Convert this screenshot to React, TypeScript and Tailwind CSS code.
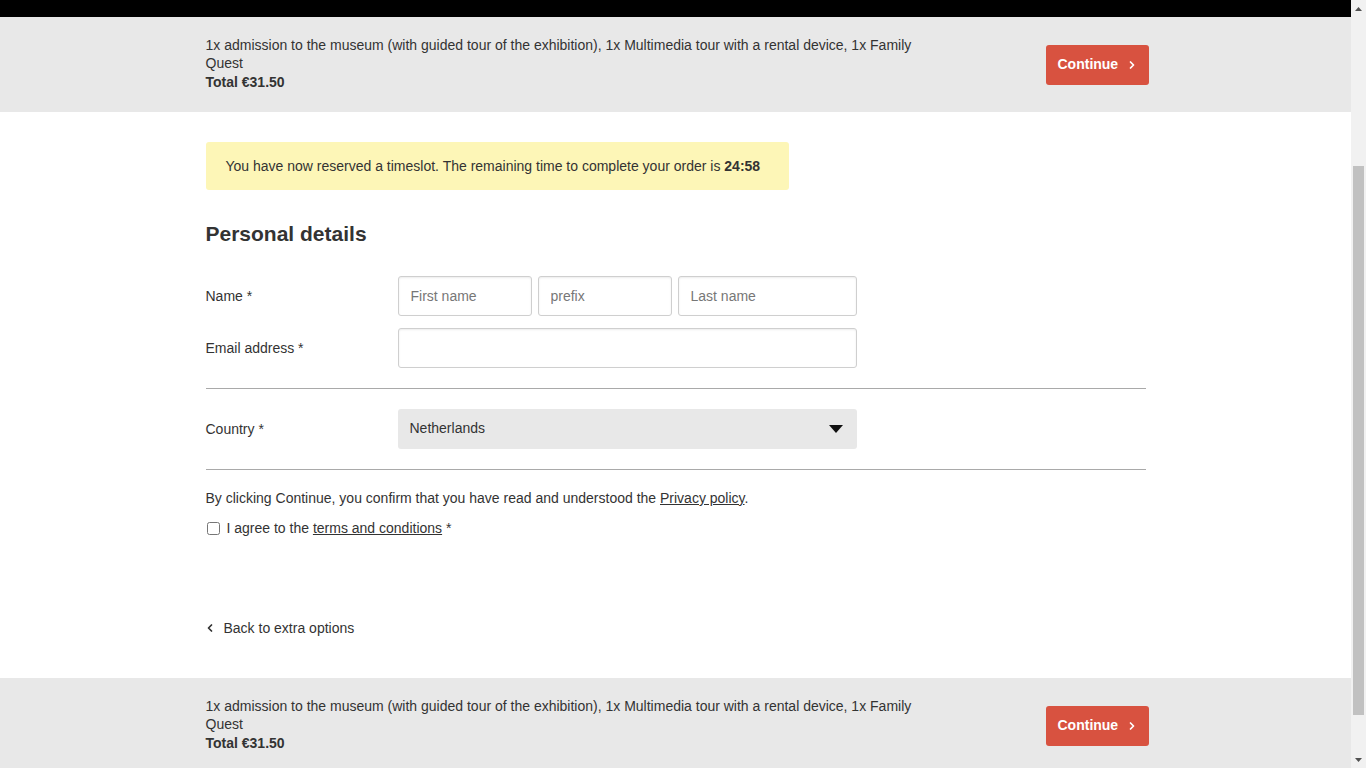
import { useEffect, useRef } from 'react';
import { ChevronLeft, ChevronRight } from 'lucide-react';

const SUMMARY =
  '1x admission to the museum (with guided tour of the exhibition), 1x Multimedia tour with a rental device, 1x Family Quest';

function OrderBar() {
  return (
    <div className="bg-[#e8e8e8]">
      <div className="w-[940px] mx-auto h-[95px] flex items-center justify-between">
        <div className="w-[720px] -mt-[2px] text-[14px] leading-[18px] text-[#333]">
          <p>{SUMMARY}</p>
          <p className="font-bold mt-px">Total €31.50</p>
        </div>
        <button className="-mr-[3px] w-[103px] h-10 pl-3 flex items-center gap-[8px] rounded-[3px] bg-[#d85240] text-white text-[14px] font-bold">
          Continue
          <ChevronRight className="w-3 h-3" strokeWidth={3.5} />
        </button>
      </div>
    </div>
  );
}

function TextInput({ placeholder, className }: { placeholder?: string; className: string }) {
  return (
    <input
      placeholder={placeholder}
      className={`h-10 px-3 rounded-[3px] border border-[#cfcfcf] shadow-[inset_0_1px_2px_rgba(0,0,0,0.08)] text-[14px] placeholder:text-[#777] outline-none ${className}`}
    />
  );
}

// the browser hides real scrollbars, so the page's scrollbar is drawn here
function Scrollbar() {
  return (
    <div className="w-[15px] shrink-0 flex flex-col bg-[#f1f1f1]">
      <div className="h-[17px] flex items-center justify-center">
        <svg width="7" height="4" viewBox="0 0 7 4">
          <path d="M0 4L3.5 0 7 4z" fill="#505050" />
        </svg>
      </div>
      <div className="flex-1 flex flex-col px-[2px] pt-[149px] pb-[36px]">
        <div className="flex-1 bg-[#c1c1c1]" />
      </div>
      <div className="h-[17px] flex items-center justify-center">
        <svg width="7" height="4" viewBox="0 0 7 4">
          <path d="M0 0h7L3.5 4z" fill="#505050" />
        </svg>
      </div>
    </div>
  );
}

export default function App() {
  const scroller = useRef<HTMLDivElement>(null);

  useEffect(() => {
    if (scroller.current) scroller.current.scrollTop = 208;
  }, []);

  return (
    <div className="h-screen flex" style={{ fontFamily: '"Liberation Sans", Arial, sans-serif' }}>
      <div ref={scroller} className="flex-1 overflow-y-scroll bg-white text-[#333]">
        <div className="h-[225px] bg-black" />
        <OrderBar />

        <main className="w-[940px] mx-auto pt-[30px] pb-[40px] text-[14px]">
          <div className="w-[583px] h-12 px-5 flex items-center rounded-[3px] bg-[#fdf6b7]">
            <p>
              You have now reserved a timeslot. The remaining time to complete your order is <b>24:58</b>
            </p>
          </div>

          <h2 className="mt-[30px] text-[21px] leading-7 font-bold">Personal details</h2>

          <div className="mt-[28px] flex flex-col gap-3">
            <div className="flex items-center">
              <label className="w-[192px]">Name *</label>
              <div className="flex gap-[6px]">
                <TextInput placeholder="First name" className="w-[134px]" />
                <TextInput placeholder="prefix" className="w-[134px]" />
                <TextInput placeholder="Last name" className="w-[179px]" />
              </div>
            </div>
            <div className="flex items-center">
              <label className="w-[192px]">Email address *</label>
              <TextInput className="w-[459px]" />
            </div>
          </div>

          <hr className="mt-5 border-[#a9a9a9]" />

          <div className="my-5 flex items-center">
            <label className="w-[192px]">Country *</label>
            <div className="w-[459px] h-10 px-3 flex items-center justify-between rounded-[3px] bg-[#e8e8e8]">
              <span className="font-medium -mt-[2px]">Netherlands</span>
              <svg width="14" height="8" viewBox="0 0 14 8" className="mr-[2px]">
                <path d="M0 0h14L7 8z" fill="#111" />
              </svg>
            </div>
          </div>

          <hr className="border-[#a9a9a9]" />

          <p className="mt-[18px] leading-5">
            By clicking Continue, you confirm that you have read and understood the{' '}
            <a className="underline">Privacy policy</a>.
          </p>
          <label className="mt-[10px] flex items-center gap-[7px] leading-5">
            <input type="checkbox" className="w-[13px] h-[13px] m-0 ml-px" />
            <span>
              I agree to the <a className="underline">terms and conditions</a> *
            </span>
          </label>

          <a className="mt-[80px] flex items-center gap-[8px] leading-5">
            <ChevronLeft className="w-3 h-3 -ml-[2px]" strokeWidth={3.5} />
            Back to extra options
          </a>
        </main>

        <OrderBar />
        <div className="h-[46px]" />
      </div>
      <Scrollbar />
    </div>
  );
}
